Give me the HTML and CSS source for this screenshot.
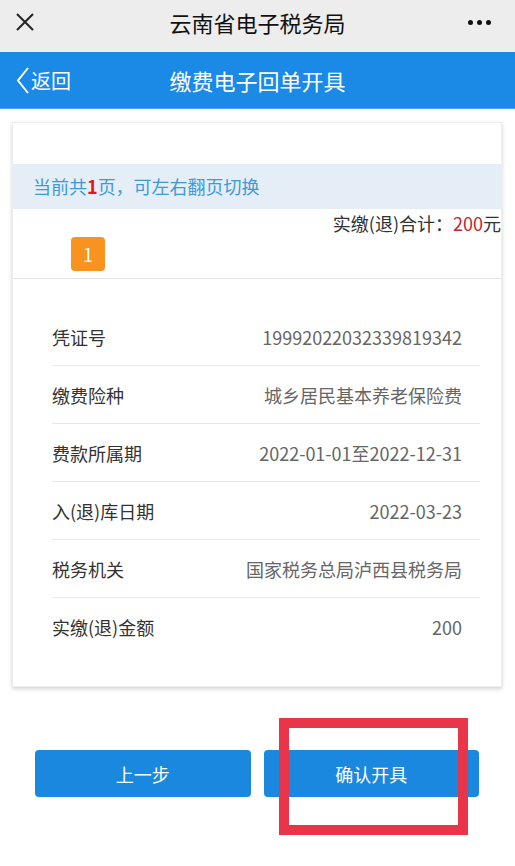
FILE: index.html
```html
<!DOCTYPE html>
<html lang="zh-CN">
<head>
    <meta charset="UTF-8">
    <meta name="viewport" content="width=device-width, initial-scale=1.0">
    <title>缴费电子回单开具</title>
    <link rel="stylesheet" href="styles.css">
</head>
<body>
    <!-- 微信顶栏 -->
    <div class="wx-bar">
        <svg class="wx-close" width="20" height="20" viewBox="0 0 20 20">
            <path d="M2 2 L18 18 M18 2 L2 18" stroke="#222" stroke-width="2" fill="none"/>
        </svg>
        <div class="wx-title">云南省电子税务局</div>
        <div class="wx-more"><span></span><span></span><span></span></div>
    </div>

    <!-- 页面标题 -->
    <div class="nav">
        <div class="nav-back">
            <svg width="13" height="27" viewBox="0 0 13 27">
                <path d="M12 1 L2 13.5 L12 26" stroke="#fff" stroke-width="2" fill="none"/>
            </svg>
            <span>返回</span>
        </div>
        <div class="nav-title">缴费电子回单开具</div>
    </div>

    <div class="page">
        <div class="card">
            <div class="tip">当前共<b>1</b>页，可左右翻页切换</div>
            <div class="total">实缴(退)合计：<em>200</em>元</div>
            <div class="pages"><span class="badge">1</span></div>

            <ul class="rows">
                <li><span>凭证号</span><span class="val">19992022032339819342</span></li>
                <li><span>缴费险种</span><span class="val">城乡居民基本养老保险费</span></li>
                <li><span>费款所属期</span><span class="val">2022-01-01至2022-12-31</span></li>
                <li><span>入(退)库日期</span><span class="val">2022-03-23</span></li>
                <li><span>税务机关</span><span class="val">国家税务总局泸西县税务局</span></li>
                <li><span>实缴(退)金额</span><span class="val">200</span></li>
            </ul>
        </div>

        <!-- 按钮 -->
        <div class="actions">
            <button class="btn">上一步</button>
            <button class="btn">确认开具</button>
            <div class="mark"></div>
        </div>
    </div>
</body>
</html>
```

FILE: styles.css
```css
/* 通用 */
body {
    margin: 0;
    font-family: "Noto Sans CJK SC", "Noto Sans", Roboto, sans-serif;
    background: #fff;
    color: #333;
}

/* 微信顶栏 */
.wx-bar {
    height: 52px;
    background: #ededed;
    display: flex;
    align-items: center;
    justify-content: space-between;
    padding: 0 24px 0 15px;
}

.wx-close {
    margin-top: -8px;
}

.wx-title {
    font-size: 22px;
    color: #111;
    margin-left: 12px;
    margin-top: -8px;
}

.wx-more {
    display: flex;
    gap: 4px;
    margin-top: -8px;
}

.wx-more span {
    width: 5px;
    height: 5px;
    border-radius: 50%;
    background: #111;
}

/* 蓝色标题栏 */
.nav {
    height: 56px;
    background: #1a8ae6;
    border-bottom: 1px solid #4ba3ea;
    position: relative;
    display: flex;
    align-items: center;
    color: #fff;
}

.nav-back {
    display: flex;
    align-items: center;
    gap: 2px;
    padding-left: 16px;
    font-size: 20px;
}

.nav-title {
    position: absolute;
    left: 0;
    right: 0;
    text-align: center;
    font-size: 22px;
    pointer-events: none;
}

/* 卡片 */
.page {
    padding: 13px 0 40px;
}

.card {
    margin: 0 13px 0 12px;
    padding: 41px 0 31px;
    background: #fff;
    border: 1px solid #ededed;
    box-shadow: 0 2px 4px rgba(0, 0, 0, 0.18);
}

.tip {
    height: 45px;
    line-height: 45px;
    background: #e5edf6;
    padding-left: 20px;
    font-size: 18px;
    color: #3d9ad8;
}

.tip b {
    color: #e8141c;
}

.total {
    text-align: right;
    font-size: 18px;
    line-height: 28px;
    color: #333;
}

.total em {
    font-style: normal;
    color: #c0262c;
}

.pages {
    padding: 0 0 7px 58px;
    border-bottom: 1px solid #e3e3e3;
}

.badge {
    display: inline-block;
    width: 34px;
    height: 34px;
    line-height: 34px;
    text-align: center;
    border-radius: 4px;
    background: #f7931e;
    color: #fff;
    font-size: 18px;
}

.rows {
    list-style: none;
    margin: 0;
    padding: 29px 21px 0 39px;
}

.rows li {
    height: 57px;
    display: flex;
    align-items: center;
    justify-content: space-between;
    padding-right: 18px;
    border-bottom: 1px solid #e8e8e8;
    font-size: 18px;
}

.rows li:last-child {
    border-bottom: none;
}

.rows .val {
    color: #666;
}

/* 按钮 */
.actions {
    position: relative;
    display: flex;
    gap: 13px;
    padding: 0 36px 0 35px;
    margin-top: 63px;
}

.btn {
    flex: 1;
    height: 47px;
    border: none;
    border-radius: 4px;
    background: #1b88e0;
    color: #fff;
    font-family: inherit;
    font-size: 18px;
}

/* 红框标注 */
.mark {
    position: absolute;
    left: 279px;
    top: -32px;
    width: 169px;
    height: 97px;
    border: 10px solid #e8354a;
}
```
